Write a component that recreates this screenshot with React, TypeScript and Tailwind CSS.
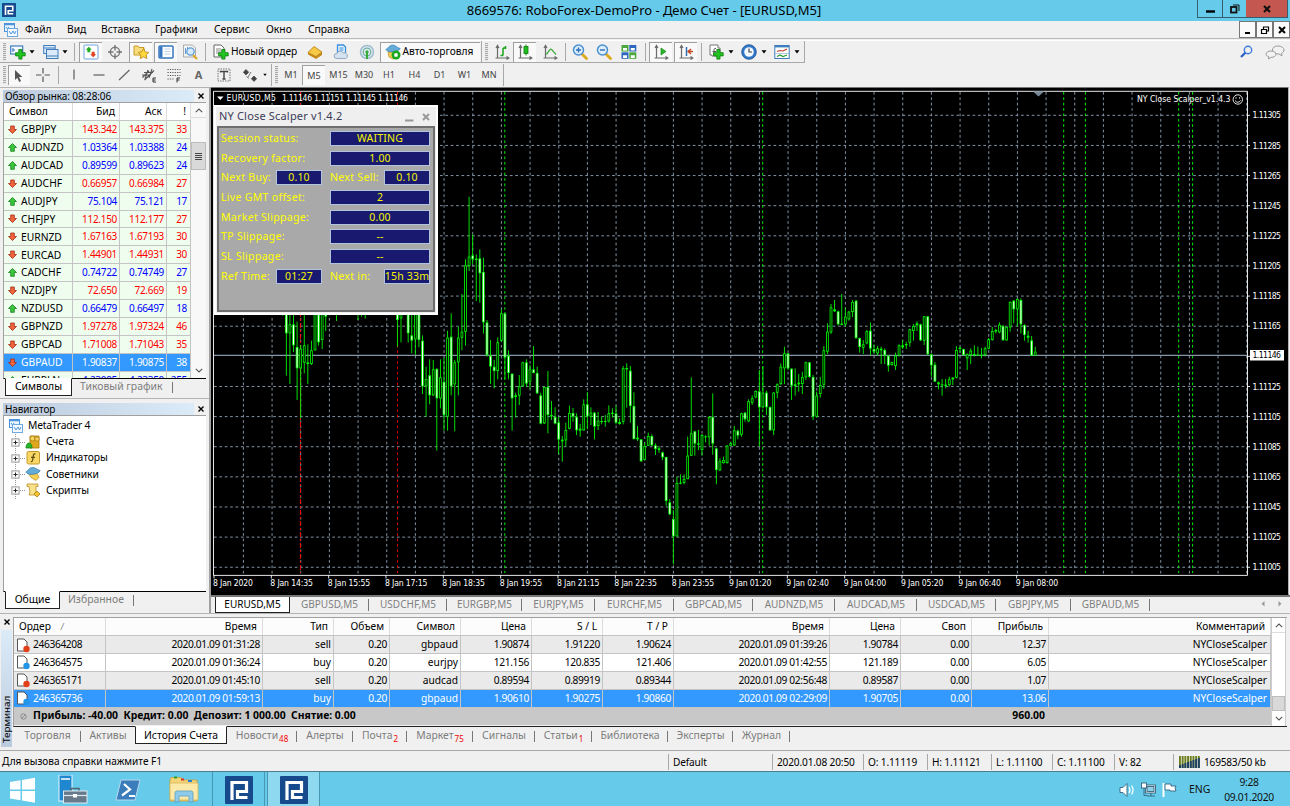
import type { ReactNode } from "react";

const quotes = [
  { s: "GBPJPY", bid: "143.342", ask: "143.375", sp: "33", up: false, red: true },
  { s: "AUDNZD", bid: "1.03364", ask: "1.03388", sp: "24", up: true, red: false },
  { s: "AUDCAD", bid: "0.89599", ask: "0.89623", sp: "24", up: true, red: false },
  { s: "AUDCHF", bid: "0.66957", ask: "0.66984", sp: "27", up: false, red: true },
  { s: "AUDJPY", bid: "75.104", ask: "75.121", sp: "17", up: true, red: false },
  { s: "CHFJPY", bid: "112.150", ask: "112.177", sp: "27", up: false, red: true },
  { s: "EURNZD", bid: "1.67163", ask: "1.67193", sp: "30", up: false, red: true },
  { s: "EURCAD", bid: "1.44901", ask: "1.44931", sp: "30", up: false, red: true },
  { s: "CADCHF", bid: "0.74722", ask: "0.74749", sp: "27", up: true, red: false },
  { s: "NZDJPY", bid: "72.650", ask: "72.669", sp: "19", up: false, red: true },
  { s: "NZDUSD", bid: "0.66479", ask: "0.66497", sp: "18", up: true, red: false },
  { s: "GBPNZD", bid: "1.97278", ask: "1.97324", sp: "46", up: false, red: true },
  { s: "GBPCAD", bid: "1.71008", ask: "1.71043", sp: "35", up: false, red: true },
  { s: "GBPAUD", bid: "1.90837", ask: "1.90875", sp: "38", up: false, red: true },
  { s: "EURPLN", bid: "4.23095", ask: "4.23350", sp: "255", up: true, red: false },
];

const orders = [
  ["246364208", "2020.01.09 01:31:28", "sell", "0.20", "gbpaud", "1.90874", "1.91220", "1.90624", "2020.01.09 01:39:26", "1.90784", "0.00", "12.37"],
  ["246364575", "2020.01.09 01:36:24", "buy", "0.20", "eurjpy", "121.156", "120.835", "121.406", "2020.01.09 01:42:55", "121.189", "0.00", "6.05"],
  ["246365171", "2020.01.09 01:45:10", "sell", "0.20", "audcad", "0.89594", "0.89919", "0.89344", "2020.01.09 02:56:48", "0.89587", "0.00", "1.07"],
  ["246365736", "2020.01.09 01:59:13", "buy", "0.20", "gbpaud", "1.90610", "1.90275", "1.90860", "2020.01.09 02:29:09", "1.90705", "0.00", "13.06"],
];

const orderHeads = ["Время", "Тип", "Объем", "Символ", "Цена", "S / L", "T / P", "Время", "Цена", "Своп", "Прибыль", "Комментарий"];
const orderCols = "grid grid-cols-[92px_157px_71px_56px_71px_71px_71px_71px_156px_71px_71px_77px_1fr]";

// [bar number, high, top, bottom, low, bull], prices in thirds of a pixel
type Bar = [number, number, number, number, number, 0 | 1];

const early: Bar[] = [
  [-1, 20, 30, 60, 77, 1], [0, 20, 60, 130, 257, 0], [1, 60, 103, 130, 282, 1], [2, 70, 103, 166, 186, 0],
  [3, 95, 171, 235, 330, 0], [4, 165, 176, 235, 385, 1], [5, 70, 166, 218, 250, 1], [6, 163, 217, 222, 282, 0],
  [7, 152, 181, 222, 225, 1], [8, 20, 60, 181, 182, 1], [9, 20, 60, 157, 167, 0], [10, 20, 70, 150, 177, 1],
  [11, 20, 60, 80, 123, 0], [14, 20, 30, 50, 93, 1], [20, 20, 30, 50, 90, 1], [21, 20, 30, 50, 80, 1],
  [22, 20, 30, 50, 86, 1], [31, 20, 50, 90, 170, 0], [32, 20, 60, 85, 157, 1], [34, 20, 60, 130, 157, 0],
  [35, 60, 136, 152, 190, 0], [36, 20, 60, 148, 195, 1], [37, 20, 60, 150, 172, 0], [38, 136, 152, 289, 312, 0],
  [39, 230, 267, 289, 380, 1], [40, 208, 256, 316, 343, 0], [41, 210, 238, 316, 318, 1], [42, 234, 237, 325, 482, 0],
  [43, 208, 262, 325, 355, 1], [44, 203, 275, 375, 422, 0], [45, 122, 143, 380, 422, 1], [46, 70, 140, 289, 316, 0],
  [47, 210, 217, 283, 424, 1], [48, 110, 143, 217, 316, 1], [49, 12, 125, 143, 181, 1], [50, -92, -74, 125, 167, 1],
  [51, -280, -100, -72, -57, 1], [52, -167, -104, -92, -77, 0], [53, -107, -94, -90, 33, 0], [54, -122, -95, -50, 38, 0],
  [55, -97, -54, 97, 131, 0], [56, 90, 97, 195, 200, 0], [57, 150, 197, 230, 282, 0], [58, 210, 230, 243, 295, 0],
  [59, 142, 157, 243, 268, 1], [60, 58, 70, 152, 155, 1], [61, 67, 70, 203, 268, 0], [62, 181, 197, 249, 268, 0],
  [63, 250, 251, 325, 422, 0], [64, 308, 316, 321, 383, 0], [65, 255, 289, 317, 345, 1], [66, 215, 217, 289, 290, 1],
  [67, 208, 217, 281, 290, 0], [68, 225, 238, 275, 297, 1], [69, 168, 238, 249, 250, 0], [70, 230, 249, 310, 312, 0],
  [71, 308, 316, 401, 403, 0], [72, 290, 291, 400, 402, 1], [73, 243, 291, 375, 430, 0], [74, 333, 375, 379, 390, 1],
  [75, 352, 381, 401, 403, 0], [76, 380, 397, 449, 493, 0], [77, 438, 449, 454, 515, 0], [78, 398, 420, 451, 470, 1],
  [79, 347, 369, 416, 418, 1], [80, 354, 369, 380, 395, 0], [81, 370, 380, 421, 435, 0], [82, 402, 416, 422, 440, 0],
  [83, 328, 343, 421, 422, 1], [84, 306, 343, 379, 418, 0], [85, 352, 368, 380, 405, 1], [86, 366, 368, 410, 448, 0],
  [87, 366, 392, 408, 420, 1], [88, 380, 393, 396, 403, 1], [89, 375, 393, 396, 410, 1], [90, 346, 370, 394, 398, 1],
  [91, 355, 368, 372, 383, 0], [92, 347, 370, 398, 403, 0], [93, 385, 396, 402, 404, 0],
];

const late: Bar[] = [
  [94, 258, 265, 425, 433, 1], [95, 250, 264, 268, 383, 0], [96, 258, 272, 378, 428, 0], [97, 337, 378, 477, 479, 0],
  [98, 438, 473, 478, 483, 0], [99, 477, 478, 544, 546, 0], [100, 487, 498, 540, 541, 1], [101, 458, 468, 497, 498, 1],
  [102, 463, 468, 496, 498, 0], [103, 490, 496, 507, 525, 0], [104, 498, 505, 510, 518, 0], [105, 515, 517, 532, 540, 0],
  [106, 530, 531, 663, 677, 0], [107, 657, 667, 703, 705, 0], [108, 690, 717, 769, 853, 0], [109, 590, 609, 769, 770, 1],
  [110, 583, 608, 611, 613, 1], [111, 583, 597, 609, 613, 1], [112, 470, 527, 597, 598, 1], [113, 292, 460, 527, 528, 1],
  [114, 452, 454, 491, 527, 0], [115, 450, 490, 494, 510, 0], [116, 462, 465, 510, 527, 1], [117, 466, 469, 472, 487, 1],
  [118, 408, 411, 472, 497, 1], [119, 340, 411, 491, 524, 0], [120, 503, 505, 570, 613, 0], [121, 535, 544, 571, 573, 1],
  [122, 530, 540, 549, 551, 1], [123, 495, 497, 549, 551, 1], [124, 486, 490, 497, 498, 1], [125, 438, 451, 496, 498, 1],
  [126, 449, 452, 467, 478, 0], [127, 398, 400, 464, 470, 1], [128, 396, 398, 418, 425, 0], [129, 358, 364, 424, 426, 1],
  [130, 346, 355, 368, 375, 1], [131, 331, 333, 352, 355, 1], [132, 270, 334, 382, 500, 0], [133, 258, 338, 382, 385, 1],
  [134, 332, 338, 382, 405, 0], [135, 379, 381, 451, 453, 0], [136, 336, 338, 451, 465, 1], [137, 310, 313, 338, 355, 1],
  [138, 250, 260, 312, 315, 1], [139, 200, 220, 265, 312, 1], [140, 219, 220, 265, 270, 0], [141, 265, 266, 317, 360, 0],
  [142, 265, 313, 318, 347, 1], [143, 282, 308, 313, 335, 0], [144, 275, 291, 312, 342, 1], [145, 245, 247, 292, 300, 1],
  [146, 246, 247, 291, 293, 0], [147, 285, 291, 410, 420, 0], [148, 335, 347, 410, 412, 1], [149, 291, 315, 342, 353, 1],
  [150, 198, 211, 314, 327, 1], [151, 130, 155, 215, 222, 1], [152, 72, 82, 157, 162, 1], [153, 60, 88, 94, 96, 0],
  [154, 92, 94, 133, 136, 0], [155, 42, 131, 135, 136, 1], [156, 82, 110, 133, 140, 1], [157, 93, 95, 118, 122, 1],
  [158, 60, 66, 96, 111, 1], [159, 60, 62, 174, 177, 0], [160, 173, 174, 201, 218, 0], [161, 180, 193, 203, 222, 1],
  [162, 150, 154, 190, 193, 1], [163, 127, 152, 206, 226, 0], [164, 193, 207, 215, 222, 0], [165, 198, 205, 220, 227, 1],
  [166, 200, 206, 211, 252, 0], [167, 205, 210, 226, 252, 0], [168, 226, 227, 257, 275, 0], [169, 245, 246, 255, 257, 1],
  [170, 218, 227, 258, 270, 1], [171, 193, 196, 227, 230, 1], [172, 180, 196, 202, 207, 1], [173, 185, 192, 196, 207, 1],
  [174, 146, 148, 188, 200, 1], [175, 132, 138, 153, 182, 1], [176, 124, 130, 136, 153, 1], [177, 131, 133, 181, 183, 0],
  [178, 108, 109, 182, 195, 1], [179, 108, 109, 223, 225, 0], [180, 220, 223, 256, 290, 0], [181, 246, 254, 305, 306, 0],
  [182, 305, 307, 313, 328, 0], [183, 297, 313, 316, 347, 1], [184, 297, 314, 318, 325, 0], [185, 290, 298, 315, 320, 1],
  [186, 291, 293, 298, 315, 1], [187, 198, 210, 293, 295, 1], [188, 200, 203, 207, 218, 1], [189, 206, 207, 225, 227, 0],
  [190, 220, 223, 235, 270, 1], [191, 205, 212, 225, 252, 1], [192, 196, 222, 226, 230, 0], [193, 200, 224, 227, 228, 1],
  [194, 204, 224, 227, 235, 1], [195, 200, 205, 225, 230, 1], [196, 174, 178, 206, 208, 1], [197, 141, 153, 180, 182, 1],
  [198, 146, 150, 155, 160, 1], [199, 127, 134, 157, 160, 1], [200, 134, 138, 181, 182, 0], [201, 140, 141, 181, 182, 1],
  [202, 64, 66, 142, 155, 1], [203, 60, 62, 88, 130, 0], [204, 55, 57, 88, 140, 1], [205, 55, 60, 133, 160, 0],
  [206, 133, 135, 165, 182, 0], [207, 152, 167, 173, 188, 0], [208, 168, 181, 227, 228, 0], [209, 200, 215, 227, 228, 1],
];

const dates = [
  "8 Jan 2020", "8 Jan 14:35", "8 Jan 15:55", "8 Jan 17:15", "8 Jan 18:35", "8 Jan 19:55", "8 Jan 21:15", "8 Jan 22:35",
  "8 Jan 23:55", "9 Jan 01:20", "9 Jan 02:40", "9 Jan 04:00", "9 Jan 05:20", "9 Jan 06:40", "9 Jan 08:00",
];

function Candles({ bars, y0 }: { bars: Bar[]; y0: number }) {
  return (
    <>
      {bars.map(([i, h, t, b, l, bull]) => {
        const x = 286.33 + 3.5833 * i;
        const top = y0 + t / 3;
        const height = Math.max((b - t) / 3, 1);
        return (
          <g key={i}>
            <rect x={x - 0.45} y={y0 + h / 3} width={0.9} height={(l - h) / 3} fill="#00f400" />
            <rect x={x - 1.35} y={top} width={2.7} height={height} fill="#00f400" />
            {height > 2 && (
              <rect x={x - 0.5} y={top + 0.8} width={1} height={height - 1.6} fill={bull ? "#000" : "#fff"} />
            )}
          </g>
        );
      })}
    </>
  );
}

function Chart() {
  const cols = Array.from({ length: 36 }, (_, k) => 243.4 + 28.667 * k);
  const rows = Array.from({ length: 16 }, (_, k) => 115.3 + 30.13 * k);
  return (
    <svg width="1079" height="508" viewBox="211 87 1079 508" className="block" fontFamily='"DejaVu Sans Condensed", "DejaVu Sans", sans-serif'>
      <rect x="211" y="87" width="1079" height="508" fill="#000" />
      <path d="M211 87.5H1288.5V594" fill="none" stroke="#777" />
      <rect x="1288.5" y="87" width="1.5" height="508" fill="#f0f0f0" />
      {cols.map((x) => (
        <path key={x} d={`M${x} 92V575`} stroke="#8293a4" strokeWidth="1" strokeDasharray="2.69 2.69" />
      ))}
      {rows.map((y, k) =>
        k === 8 ? null : <path key={y} d={`M214 ${y}H1247`} stroke="#8293a4" strokeWidth="1" strokeDasharray="2.69 2.69" />
      )}
      <path d="M300.4 92V573" stroke="#f00" strokeDasharray="5 2 2 2" />
      <path d="M397.5 92V573" stroke="#e00000" strokeDasharray="2.69 2.69" />
      {[504.8, 762.7, 1063.7, 1085.4, 1178.7, 1192.6].map((x) => (
        <path key={x} d={`M${x} 92V573`} stroke="#00f000" strokeDasharray="2.69 2.69" />
      ))}
      <path d="M214 355.4H1247" stroke="#8496a8" strokeWidth="1.2" />
      <Candles bars={early} y0={290} />
      <Candles bars={late} y0={280} />
      <path d="M213.5 575.4V91.3H1247.5V575.4Z" fill="none" stroke="#fff" strokeWidth="0.9" />
      <path d="M1033 91.5h11l-5.5 5z" fill="#778899" />
      {rows.map((y, k) => (
        <g key={y}>
          <path d={`M1247 ${y}h3`} stroke="#fff" strokeWidth="0.9" />
          {k !== 8 && (
            <text x="1252.5" y={y + 3.1} fontSize="8.6" fill="#fff" textLength="28.5">
              {(1.11305 - k * 0.0002).toFixed(5)}
            </text>
          )}
        </g>
      ))}
      <rect x="1250" y="350" width="34" height="10.5" fill="#fff" />
      <text x="1252.5" y="358.4" fontSize="8.6" fill="#000" textLength="28.5">1.11146</text>
      {dates.map((d, k) => (
        <g key={d}>
          <path d={`M${214 + 57.333 * k} 575v3.5`} stroke="#fff" strokeWidth="0.9" />
          <text x={213 + 57.333 * k} y="586.4" fontSize="8.6" fill="#fff" textLength={k ? 42.5 : 40}>{d}</text>
        </g>
      ))}
      <path d="M217 96.5h6.5l-3.2 3.6z" fill="#fff" />
      <text x="226.5" y="101.3" fontSize="8.6" fill="#fff" textLength="49.5">EURUSD,M5</text>
      <text x="282" y="101.3" fontSize="8.6" fill="#fff" textLength="126">1.11146 1.11151 1.11145 1.11146</text>
      <text x="1137" y="102.3" fontSize="8.6" fill="#fff" textLength="93.5">NY Close Scalper_v1.4.3</text>
      <g fill="none" stroke="#fff" strokeWidth="0.9">
        <circle cx="1237.8" cy="99.5" r="4.7" />
        <path d="M1235 100.5q2.8 3.6 5.6 0M1236 97.2v1.5M1239.6 97.2v1.5" />
      </g>
    </svg>
  );
}

function Box({ children }: { children: ReactNode }) {
  return (
    <div className="h-[15px] flex items-center justify-center overflow-hidden border border-[#b0c4de] bg-[#191970] text-[10.5px] tracking-[0.2px] text-[#f4f400] whitespace-nowrap">
      {children}
    </div>
  );
}

function ScalperPanel() {
  const rows = [
    ["Session status:", "WAITING"],
    ["Recovery factor:", "1.00"],
    ["Next Buy:", "0.10", "Next Sell:", "0.10"],
    ["Live GMT offset:", "2"],
    ["Market Slippage:", "0.00"],
    ["TP Slippage:", "--"],
    ["SL Slippage:", "--"],
    ["Ref Time:", "01:27", "Next in:", "15h 33m"],
  ];
  return (
    <div className="absolute left-[3px] top-[18px] w-[224px] h-[210px] flex flex-col bg-[#efefef] border-2 border-white p-[1px] pt-0">
      <div className="h-[19px] flex items-center pl-[2px] pr-1 text-[11px] tracking-[0.18px] text-[#3c3c5a]">
        <span className="flex-1">NY Close Scalper v1.4.2</span>
        <svg width="28" height="12" viewBox="0 0 28 12" stroke="#999" fill="none">
          <path d="M2 9.500h8.500" strokeWidth="2" />
          <path d="M20 3l6 6M26 3l-6 6" strokeWidth="2" />
        </svg>
      </div>
      <div className="flex-1 border-2 border-[#6e6e6e] bg-[#a9a9a9] pl-[2px] pr-[2px] pt-[3px] text-[10.5px] tracking-[0.32px] text-[#ffff00] flex flex-col gap-[4.7px]">
        {rows.map((r) => (
          <div key={r[0]} className={r.length > 2 ? "grid grid-cols-[55px_46px_8px_54px_46px] items-center leading-[15px] whitespace-nowrap" : "grid grid-cols-[109px_100px] items-center leading-[15px] whitespace-nowrap"}>
            <span>{r[0]}</span>
            <Box>{r[1]}</Box>
            {r.length > 2 && (
              <>
                <span />
                <span>{r[2]}</span>
                <Box>{r[3]}</Box>
              </>
            )}
          </div>
        ))}
      </div>
    </div>
  );
}

function Logo({ size }: { size: number }) {
  return (
    <svg width={size} height={size} viewBox="0 0 28 28" className="shrink-0">
      <rect width="28" height="28" rx="1" fill="#164a8c" />
      <path d="M7 24V6.500H21.500V15.500H12.500V21.500H22.500" fill="none" stroke="#fff" strokeWidth="3.200" />
    </svg>
  );
}

function Tool({ w, on, children }: { w: string; on?: boolean; children?: ReactNode }) {
  return (
    <div className={`${w} h-[20px] shrink-0 flex items-center justify-center whitespace-nowrap ${on ? "border-l border-t border-[#a0a0a0] bg-[#f9f9f9]" : ""}`}>
      {children}
    </div>
  );
}

function Sep({ w }: { w: string }) {
  return (
    <div className={`${w} shrink-0 flex justify-center`}>
      <div className="w-px h-[18px] bg-[#a8a8a8]" />
    </div>
  );
}

function Grip() {
  return (
    <div className="w-2 shrink-0 flex justify-center">
      <div className="w-[3px] h-[18px] bg-[repeating-linear-gradient(to_bottom,#a9a9a9_0_1px,#e6e6e6_1px_2px)]" />
    </div>
  );
}

function Caret({ w }: { w: string }) {
  return (
    <div className={`${w} shrink-0 flex justify-center`}>
      <svg width="6" height="4" viewBox="0 0 6 4"><path d="M.5 .3h5L3 3.500z" fill="#000" /></svg>
    </div>
  );
}

function Svg({ children }: { children: ReactNode }) {
  return (
    <svg width="16" height="16" viewBox="0 0 16 16" fill="none" className="shrink-0">{children}</svg>
  );
}

const plus = "M8.800 5.500h3.200v3.200h3.200v3.200h-3.200v3.200h-3.200v-3.200H5.600V8.700h3.200z";

const Axes = () => <path d="M3.500 1.500v12.500H15M2 4l1.500-2.500L5 4M12.500 12.500L15 14l-2.500 1.500M1.500 14h3" stroke="#6b6b6b" strokeWidth="1.200" />;

function MtIcon() {
  return (
    <Svg>
      <rect x="1.500" y="1.500" width="10" height="8" fill="#e8f3fd" stroke="#4d94dc" />
      <path d="M1 2.500h11" stroke="#4d94dc" strokeWidth="1.500" />
      <path d="M3 5l1.500 2L6 5" stroke="#4d94dc" />
      <rect x="4.500" y="6.500" width="10" height="8" fill="#f4faff" stroke="#6fa9e4" />
      <path d="M6 9l2 3 2-3 1.500 3L13 9" stroke="#4d94dc" />
    </Svg>
  );
}

function Magnifier({ sign }: { sign: string }) {
  return (
    <Svg>
      <path d="M10 10l4.500 4.500" stroke="#dba820" strokeWidth="2.800" strokeLinecap="round" />
      <circle cx="6.500" cy="6" r="5" fill="#dceefb" stroke="#4a8fd0" strokeWidth="1.500" />
      <path d={sign} stroke="#2f6fb5" strokeWidth="1.400" />
    </Svg>
  );
}

function TopToolbar() {
  return (
    <div className="h-[23px] shrink-0 flex items-center border-t border-white text-[10.2px]">
      <div className="h-[22px] flex items-center border-b border-[#a8a8a8] border-r w-[482px] shrink-0">
        <Grip />
        <Tool w="w-5">
          <Svg>
            <rect x=".7" y="2" width="12" height="8" fill="#f4faff" stroke="#3f7dbd" strokeWidth="1.200" />
            <path d="M3 4v4M2 6h3" stroke="#3f7dbd" />
            <path d={plus} fill="#22c322" stroke="#0b7d0b" strokeWidth=".8" />
          </Svg>
        </Tool>
        <Caret w="w-2" />
        <Tool w="ml-[5px] w-5">
          <Svg>
            <rect x=".7" y="1.500" width="11.500" height="8" fill="#dcebf9" stroke="#3f7dbd" />
            <rect x="3.500" y="5.500" width="11.500" height="9" fill="#dcebf9" stroke="#3f7dbd" />
            <path d="M1 4h11M3.500 12h11.500" stroke="#3f7dbd" />
          </Svg>
        </Tool>
        <Caret w="w-2" />
        <Sep w="w-[10px]" />
        <Tool w="w-[23px]" on>
          <Svg>
            <rect x="1" y="1" width="14" height="14" rx="1" fill="#fff" stroke="#6da5df" />
            <path d="M5.800 2.800l3 3H7.300v2.400H4.300V5.800H2.800z" fill="#1fae1f" />
            <path d="M10.200 13.200l-3-3h1.500V7.800h3v2.400h1.500z" fill="#e0401c" />
          </Svg>
        </Tool>
        <Tool w="w-[26px]">
          <Svg>
            <circle cx="8" cy="8" r="4.700" stroke="#777" strokeWidth="1.400" />
            <path d="M8 1v5.500M8 9.500V15M1 8h5.500M9.500 8H15" stroke="#777" strokeWidth="1.400" />
          </Svg>
        </Tool>
        <Tool w="ml-px w-[23px]" on>
          <Svg>
            <path d="M1 2h4l1 1.500h5V11H1z" fill="#f8dc7c" stroke="#c99b24" />
            <path d="M10.500 4.500l1.700 3.400 3.600.5-2.600 2.500.6 3.700-3.300-1.800-3.300 1.800.6-3.700-2.600-2.500 3.600-.5z" fill="#ffd83c" stroke="#b98510" strokeWidth=".8" />
          </Svg>
        </Tool>
        <Tool w="ml-[2px] w-[23px]" on>
          <Svg>
            <rect x="1" y="2" width="14" height="12" rx="1" fill="#fff" stroke="#3677bf" strokeWidth="1.500" />
            <rect x="1.500" y="2.500" width="3" height="11" fill="#3677bf" />
            <path d="M6.500 5h6M6.500 7.500h6M6.500 10h6" stroke="#a9c6e6" strokeWidth=".8" />
          </Svg>
        </Tool>
        <Tool w="w-[26px]">
          <Svg>
            <path d="M1.500 1h9l3 3v9h-12z" fill="#f4f4f4" stroke="#999" strokeWidth=".8" />
            <path d="M3.500 4v6M5.500 3v6" stroke="#5e9ad8" />
            <path d="M11 11l4 4" stroke="#dba820" strokeWidth="2.200" />
            <circle cx="8.500" cy="7.500" r="3.700" fill="#d6ebfb" stroke="#5e9ad8" strokeWidth="1.300" />
          </Svg>
        </Tool>
        <Sep w="w-[5px]" />
        <Tool w="ml-[2px] w-[94px]">
          <div className="w-full flex items-center pl-[3px]">
            <Svg>
              <path d="M1 1h7l3 3v9H1z" fill="#fff" stroke="#666" />
              <path d="M3 5h5M3 7h6M3 9h4" stroke="#888" />
              <path d={plus} fill="#22c322" stroke="#0b7d0b" strokeWidth=".8" />
            </Svg>
            <span className="ml-[2px]">Новый ордер</span>
          </div>
        </Tool>
        <Tool w="w-[22px]">
          <Svg>
            <path d="M1 8.500l6-6 8 5.500v3l-6 4-8-4.500z" fill="#c58a1a" />
            <path d="M1 8.500l6-6 8 5.500-6 4.500z" fill="#f7c944" stroke="#b07812" strokeWidth=".7" />
          </Svg>
        </Tool>
        <Tool w="w-[29px]">
          <Svg>
            <path d="M4.500 1h6l2 2v7h-8z" fill="#e3f2fe" stroke="#3b8edb" strokeWidth="1.300" />
            <path d="M6.500 4h4M6.500 6h4" stroke="#3b8edb" />
            <path d="M3.500 14.500a2.500 2.500 0 01.3-5 3.500 3.500 0 016.400-.5 2.700 2.700 0 012.500 5.500z" fill="#d5e2ef" stroke="#8198b3" strokeWidth=".8" />
          </Svg>
        </Tool>
        <Tool w="w-[23px]">
          <Svg>
            <circle cx="8" cy="8" r="6.500" fill="#e4eef4" stroke="#9fbccf" strokeWidth="1.500" />
            <circle cx="8" cy="8" r="3.800" stroke="#6fae9c" strokeWidth="1.300" />
            <circle cx="8" cy="8" r="1.700" fill="#38ab38" />
            <path d="M8 8v7" stroke="#38ab38" strokeWidth="2" />
          </Svg>
        </Tool>
        <Tool w="ml-[2px] w-[100px]" on>
          <Svg>
            <path d="M3 8l10-.5-1 5-4 2.500-4-2z" fill="#f6cf55" stroke="#b78a1a" strokeWidth=".7" />
            <path d="M.8 5.500C3 5 4 1 7.500 1S12 4 15.200 4.500C14 8 3 9.500.8 5.500z" fill="#65abd8" stroke="#2f7db3" strokeWidth=".7" />
            <circle cx="11" cy="11" r="4.500" fill="#1ca81c" />
            <rect x="9.300" y="9.300" width="3.400" height="3.400" rx=".8" fill="#fff" />
          </Svg>
          <span className="ml-[2px] mr-[3px]">Авто-торговля</span>
        </Tool>
      </div>
      <div className="h-[22px] flex items-center border-b border-r border-[#a8a8a8] w-[323px] shrink-0">
        <Grip />
        <Tool w="w-[23px]">
          <Svg><Axes /><path d="M9 4v7.500M9 4h2.500M6.500 11.500H9M11.500 2v3" stroke="#17a317" strokeWidth="1.500" /></Svg>
        </Tool>
        <Tool w="w-[23px]" on>
          <Svg><Axes /><path d="M9 .5v11" stroke="#118811" /><rect x="7" y="2.500" width="4" height="7" fill="#1fbf1f" stroke="#0b7d0b" strokeWidth=".8" /></Svg>
        </Tool>
        <Tool w="w-[27px]">
          <Svg><Axes /><path d="M4.500 10.500C7 7 8 5 9 5.200s3 3.300 5 5.300" stroke="#3daa3d" strokeWidth="1.300" /></Svg>
        </Tool>
        <Sep w="w-[5px]" />
        <Tool w="w-[23px]"><Magnifier sign="M4 6h5M6.500 3.500v5" /></Tool>
        <Tool w="w-[26px]"><Magnifier sign="M4 6h5" /></Tool>
        <Tool w="w-6">
          <Svg>
            <rect x=".5" y="1" width="7" height="6.500" fill="#4ba83d" /><rect x="8.300" y="1" width="7" height="6.500" fill="#2c66c0" />
            <rect x=".5" y="8.300" width="7" height="6.500" fill="#2c66c0" /><rect x="8.300" y="8.300" width="7" height="6.500" fill="#4ba83d" />
            <path d="M2 5.300h4M9.800 5.300h4M2 12.600h4M9.800 12.600h4" stroke="#fff" strokeWidth="2.600" />
          </Svg>
        </Tool>
        <Sep w="w-2" />
        <Tool w="w-[23px]" on><Svg><Axes /><path d="M8 4v7l5-3.500z" fill="#2cb52c" stroke="#118811" strokeWidth=".7" /></Svg></Tool>
        <Tool w="ml-[2px] w-[23px]" on><Svg><Axes /><path d="M8.500 3v9" stroke="#2f6fb5" strokeWidth="1.500" /><path d="M15 7.500h-4M13 5l-3 2.500L13 10" stroke="#c4421e" strokeWidth="1.300" /></Svg></Tool>
        <Sep w="w-2" />
        <Tool w="w-[22px]">
          <Svg>
            <path d="M2 1h8v3h2v8H4v-1H2z" fill="#fff" stroke="#777" />
            <path d="M8 4.500c-1.500-.5-2 .5-2 2V11M4.500 7.500H8" stroke="#555" />
            <path d={plus} fill="#22c322" stroke="#0b7d0b" strokeWidth=".8" />
          </Svg>
        </Tool>
        <Caret w="w-2" />
        <Tool w="ml-[3px] w-[22px]">
          <Svg>
            <circle cx="8" cy="8" r="7.300" fill="#2f77c9" stroke="#1d4f94" strokeWidth=".8" />
            <circle cx="8" cy="8" r="4.800" fill="#f2f8ff" />
            <path d="M8 4.500V8h3" stroke="#444" strokeWidth="1.200" />
          </Svg>
        </Tool>
        <Caret w="w-[7px]" />
        <Tool w="ml-[4px] w-[22px]">
          <Svg>
            <rect x=".8" y="1.500" width="14.400" height="13" fill="#fff" stroke="#3f7dbd" />
            <path d="M1 2.500h14" stroke="#3f7dbd" strokeWidth="1.800" />
            <path d="M3 7.500l3-1 3 .5 4-2" stroke="#c23b22" strokeWidth="1.200" />
            <path d="M1 9.500h14" stroke="#8fb4da" strokeWidth=".7" />
            <path d="M3 12.500l3-1.500 3 1.500 4-1.500" stroke="#2c9a2c" strokeWidth="1.200" />
          </Svg>
        </Tool>
        <Caret w="w-[7px]" />
      </div>
      <div className="flex-1" />
      <div className="flex items-center gap-3 pr-[5px]">
        <svg width="14" height="14" viewBox="0 0 14 14" fill="none"><circle cx="9" cy="5" r="3.700" stroke="#3c7be0" strokeWidth="1.400" /><path d="M6.300 7.700L2 12" stroke="#2d62c4" strokeWidth="2.300" /></svg>
        <svg width="20" height="15" viewBox="0 0 20 15" fill="#f2f2f2" stroke="#9a9a9a" strokeWidth="1"><path d="M13 1c3.500 0 6 1.800 6 4 0 1.500-1 2.700-2.500 3.300l.5 2.500L14 9c-4 0-6.500-1.700-6.500-4S9.500 1 13 1z" /><path d="M6 6c3 0 5 1.400 5 3.200s-2 3.200-5 3.200L3.500 14l.3-2.300C2 11.200 1 10.300 1 9.200 1 7.400 3 6 6 6z" /></svg>
      </div>
    </div>
  );
}

function DrawToolbar() {
  const frames = [
    ["M1", "w-[22px]"], ["M5", "w-[23px]"], ["M15", "w-[27px]"], ["M30", "w-6"], ["H1", "w-[26px]"],
    ["H4", "w-[25px]"], ["D1", "w-[25px]"], ["W1", "w-[25px]"], ["MN", "w-6"],
  ];
  return (
    <div className="h-[24px] shrink-0 flex items-center text-[9px] text-[#444]">
      <div className="h-[22px] w-[272px] shrink-0 flex items-center border-r border-[#a8a8a8]">
        <Grip />
        <Tool w="w-[22px]" on>
          <div className="-ml-1"><Svg><path d="M5 2v10l2.300-2.200L9.200 14l1.800-.9L9 9h3.300z" fill="#555" /></Svg></div>
        </Tool>
        <Tool w="w-[26px]"><Svg><path d="M8 1v5.500M8 9.500V15M1 8h5.500M9.500 8H15" stroke="#555" strokeWidth="1.200" /></Svg></Tool>
        <Sep w="w-[5px]" />
        <Tool w="w-[26px]"><Svg><path d="M8 2.500v10" stroke="#666" strokeWidth="1.300" /></Svg></Tool>
        <Tool w="w-6"><Svg><path d="M2.500 8h11" stroke="#666" strokeWidth="1.300" /></Svg></Tool>
        <Tool w="w-[25px]"><Svg><path d="M3 13L13.500 3" stroke="#666" strokeWidth="1.300" /></Svg></Tool>
        <Tool w="w-[25px]">
          <Svg>
            <path d="M1.500 10.500L8 4M3.500 13L13 3.500M1 8h9M3 5.500h9M4 12l3-9M8 11l3-9" stroke="#555" strokeWidth="1.100" />
            <path d="M15 11h-3v4h3M12 13h2.500" stroke="#333" />
          </Svg>
        </Tool>
        <Tool w="w-[25px]">
          <Svg>
            <path d="M1.500 2.500h13M1.500 5.500h13M1.500 8.500h13M1.500 12h7" stroke="#555" strokeDasharray="1.200 1.200" />
            <path d="M14 11h-3v4.500M11 13h2.500" stroke="#333" />
          </Svg>
        </Tool>
        <Tool w="w-[25px]"><span className="text-[11px] font-bold text-[#666]">A</span></Tool>
        <Tool w="w-[25px]">
          <Svg>
            <rect x="2" y="2" width="12" height="12" stroke="#777" strokeDasharray="1.500 1" />
            <path d="M4.500 5.500V4.500h7v1M8 4.500V12M6.500 12h3" stroke="#444" strokeWidth="1.400" />
          </Svg>
        </Tool>
        <Tool w="w-[27px]">
          <Svg><path d="M4 2.500l2.700 2.700L4 8 1.300 5.200zM9 5L6 10M4.500 9.500L7 11.500M12 9l2.700 2.700L12 14.400l-2.700-2.700z" fill="#444" stroke="#444" strokeWidth=".7" /></Svg>
        </Tool>
        <Caret w="w-1" />
      </div>
      <div className="h-[22px] flex items-center border-r border-[#a8a8a8] w-[232px] shrink-0">
        <Grip />
        {frames.map(([f, w]) => (
          <Tool key={f} w={w} on={f === "M5"}>{f}</Tool>
        ))}
      </div>
    </div>
  );
}

function Arrow({ up }: { up: boolean }) {
  return (
    <svg width="9" height="9" viewBox="0 0 9 9" className="shrink-0">
      {up
        ? <path d="M4.500 .5L8.500 4.500H6.300V8.300H2.700V4.500H.5z" fill="#3cc63c" stroke="#12801a" strokeWidth=".8" />
        : <path d="M4.500 8.500L8.500 4.500H6.300V1H2.700V4.500H.5z" fill="#f0653c" stroke="#a32a12" strokeWidth=".8" />}
    </svg>
  );
}

function PaneTitle({ children }: { children: ReactNode }) {
  return (
    <div className="h-[13px] flex items-center text-[10px] leading-[13px]">
      <div className="flex-1 h-[12px] leading-[12px] pl-[2px] tracking-[-0.12px] bg-gradient-to-r from-[#bccbdd] to-[#dcebf8]">{children}</div>
      <div className="w-[13px] flex justify-center">
        <svg width="6" height="6" viewBox="0 0 6 6"><path d="M.5 .5l5 5M5.500 .5l-5 5" stroke="#000" strokeWidth="1.400" /></svg>
      </div>
    </div>
  );
}

function ScrollArrow({ down }: { down?: boolean }) {
  return (
    <svg width="8" height="5" viewBox="0 0 8 5" fill="none" stroke="#555" strokeWidth="1.100">
      <path d={down ? "M.8 .8L4 4 7.200 .8" : "M.8 4.200L4 1l3.200 3.200"} />
    </svg>
  );
}

function MarketWatch() {
  return (
    <div className="h-[311px] pt-px pl-[3px] pr-[2px] border-b border-[#b4b4b4]">
      <PaneTitle>Обзор рынка: 08:28:06</PaneTitle>
      <div className="h-[277px] mr-[1px] flex border-t border-l border-[#a0a0a0] border-b-[#000] border-b bg-white overflow-hidden">
        <div className="w-[187px] text-[10.3px]">
          <div className="h-[17px] grid grid-cols-[69px_47px_47px_24px] leading-[17px] text-right [&>span]:pr-[4px] [&>span]:border-r [&>span]:border-[#dcdcdc]">
            <span className="text-left pl-[5px]">Символ</span><span>Бид</span><span>Аск</span><span>!</span>
          </div>
          {quotes.map((q) => {
            const sel = q.s === "GBPAUD";
            return (
              <div
                key={q.s}
                className={`h-[17.92px] grid grid-cols-[69px_47px_47px_24px] leading-[16.5px] text-right border-t border-[#c4c4c4] [&>span]:pr-[2px] [&>span]:border-r [&>span]:border-[#c4c4c4] ${sel ? "bg-[#3399ff] text-white" : q.red ? "bg-[#effdef] text-[#f00]" : "bg-[#effdef] text-[#00f]"}`}
              >
                <span className={`flex items-center gap-[4px] pl-[4px] ${sel ? "text-white" : "text-black"}`}><Arrow up={q.up} />{q.s}</span>
                <span className="text-[10px] tracking-[-0.3px]">{q.bid}</span>
                <span className="text-[10px] tracking-[-0.3px]">{q.ask}</span>
                <span className="text-[10px] !pr-[3px] tracking-[-0.3px]">{q.sp}</span>
              </div>
            );
          })}
        </div>
        <div className="flex-1 bg-[#f8f8f8] flex flex-col">
          <div className="h-[15px] flex items-center justify-center border-b border-[#ddd]"><ScrollArrow /></div>
          <div className="h-[24px]" />
          <div className="h-[28px] border border-[#bdbdbd] bg-[#d9d9d9] flex flex-col items-center justify-center gap-[1px]">
            <i className="w-[7px] h-px bg-[#444]" /><i className="w-[7px] h-px bg-[#444]" /><i className="w-[7px] h-px bg-[#444]" /><i className="w-[7px] h-px bg-[#444]" />
          </div>
          <div className="flex-1" />
          <div className="h-[15px] flex items-center justify-center"><ScrollArrow down /></div>
        </div>
      </div>
      <PaneTabs active="Символы" other="Тиковый график" w="w-[67px]" />
    </div>
  );
}

function PaneTabs({ active, other, w }: { active: string; other: string; w: string }) {
  return (
    <div className="h-[18px] -mt-px flex items-start pl-[2px] text-[10.4px] leading-[15px]">
      <div className={`${w} h-[18px] border border-t-white border-[#222] bg-white text-center`}>{active}</div>
      <span className="pl-[8px] text-[#7d7d7d] leading-[17px]">{other}</span>
      <span className="ml-[9px] mt-[4px] w-px h-[11px] bg-[#777]" />
    </div>
  );
}

function Navigator() {
  const items = ["Счета", "Индикаторы", "Советники", "Скрипты"];
  const icons = [
    <Svg key="a"><path d="M5 2h9v12H5z" fill="#e0a81c" stroke="#a8780c" strokeWidth=".8" /><circle cx="7.500" cy="4.500" r="2.500" fill="#f4d460" stroke="#a8780c" strokeWidth=".8" /><circle cx="12" cy="5" r="2.200" fill="#f4d460" stroke="#a8780c" strokeWidth=".8" /><path d="M1 14c0-3 1-5 3-5s3 2 3 5z" fill="#2cb52c" stroke="#118811" strokeWidth=".8" /></Svg>,
    <Svg key="b"><rect x="2" y="1.500" width="12.500" height="12.500" rx="1.500" fill="#f8d764" stroke="#c49a2a" /><path d="M10.500 4c-2-.7-2.300 1-2.500 3.500S7.500 12 5.800 11.500M6 7.300h4" stroke="#5c4a12" strokeWidth="1.200" /></Svg>,
    <Svg key="c"><path d="M4 8l8-.5 2 4-3 3-5-3z" fill="#f6cf55" stroke="#b78a1a" strokeWidth=".7" /><path d="M.8 6C3 5 4 1.500 7.500 1.500S12 4 15.200 4.500C14 8.500 3 10 .8 6z" fill="#65abd8" stroke="#2f7db3" strokeWidth=".7" /></Svg>,
    <Svg key="d"><path d="M2 2h11v2.500h-2V10l1.500 3H4l1-3-1-5.500H2z" fill="#f9e08a" stroke="#b98f22" strokeWidth=".8" /><path d="M12 9l3 3-3 3-3-3z" fill="#f3c533" stroke="#a8780c" strokeWidth=".8" /></Svg>,
  ];
  return (
    <div className="h-[213px] pt-[3px] pl-[3px] pr-[2px]">
      <PaneTitle>Навигатор</PaneTitle>
      <div className="h-[177px] mr-[1px] pt-px border-t border-l border-[#a0a0a0] border-b-[#000] border-b bg-white text-[10.3px] tracking-[-0.08px]">
        <div className="h-[17px] flex items-center gap-[4px] pl-[4px]"><MtIcon /><span className="tracking-[-0.2px]">MetaTrader 4</span></div>
        {items.map((it, i) => (
          <div key={it} className="h-[16.13px] flex items-center pl-[7px]">
            <svg width="14" height="16.500" viewBox="0 0 14 16.500" fill="none" className="shrink-0">
              <path d="M4.500 0v17M9 8.500h6" stroke="#999" strokeDasharray="1 1" />
              <rect x=".9" y="4.900" width="7.200" height="7.200" fill="#fff" stroke="#999" />
              <path d="M2.500 8.500h4M4.500 6.500v4" stroke="#222" />
            </svg>
            {icons[i]}
            <span className="pl-[5px]">{it}</span>
          </div>
        ))}
      </div>
      <PaneTabs active="Общие" other="Избранное" w="w-[55px]" />
    </div>
  );
}

const chartTabs = ["GBPUSD,M5", "USDCHF,M5", "EURGBP,M5", "EURJPY,M5", "EURCHF,M5", "GBPCAD,M5", "AUDNZD,M5", "AUDCAD,M5", "USDCAD,M5", "GBPJPY,M5", "GBPAUD,M5"];
const tabWidths = ["w-[79px]", "w-[78px]", "w-[75px]", "w-[73px]", "w-[79px]", "w-[79px]", "w-[82px]", "w-[82px]", "w-[79px]", "w-[75px]", "w-[79px]"];

function ChartTabs() {
  return (
    <div className="h-[18px] flex items-start border-t-2 border-[#777] text-[10px] leading-[15px] text-[#808080]">
      <div className="ml-1 w-[75px] h-[16px] border-x border-b border-[#222] bg-white text-center text-black">EURUSD,M5</div>
      {chartTabs.map((t, i) => (
        <div key={t} className={`${tabWidths[i]} flex items-center justify-center relative`}>
          {t}
          <i className="absolute right-0 top-[2px] w-px h-[12px] bg-[#777]" />
        </div>
      ))}
      <div className="flex-1" />
      <svg width="24" height="15" viewBox="0 0 24 15" fill="#999"><path d="M3.500 4v5.500L.5 6.800zM17.500 4v5.500l3-2.700z" /></svg>
      <div className="w-[5px]" />
    </div>
  );
}

function Terminal() {
  const tabs: [string, string, string?][] = [
    ["Новости", "w-[70px]", "48"], ["Алерты", "w-[56px]"], ["Почта", "w-[54px]", "2"], ["Маркет", "w-[66px]", "75"],
    ["Сигналы", "w-[62px]"], ["Статьи", "w-[57px]", "1"], ["Библиотека", "w-[76px]"], ["Эксперты", "w-[65px]"], ["Журнал", "w-[57px]"],
  ];
  return (
    <div className="h-[137px] shrink-0 border-t border-[#b4b4b4] flex pt-[3px]">
      <div className="w-[13px] shrink-0 flex flex-col items-center pt-[2px]">
        <svg width="6" height="6" viewBox="0 0 6 6"><path d="M.5 .5l5 5M5.500 .5l-5 5" stroke="#000" strokeWidth="1.400" /></svg>
        <div className="mt-[5px] w-[11px] h-[117px] bg-gradient-to-b from-[#bccbdd] to-[#dcebf8] pt-[4px] [writing-mode:vertical-rl] rotate-180 text-[9.8px] leading-[11px]">
          Терминал
        </div>
      </div>
      <div className="flex-1 min-w-0 pr-[3px]">
        <div className="h-[110px] flex border-t border-l border-[#a0a0a0] border-b-[#222] border-b">
          <div className="w-[1257px] text-[10.2px]">
            <div className={`${orderCols} h-[17px] bg-[#fcfcfc] leading-[17px] text-right [&>span]:pr-[5px] [&>span]:border-r [&>span]:border-[#dcdcdc]`}>
              <span className="text-left pl-[5px]">Ордер<i className="pl-[10px] text-[8px] text-[#777]">/</i></span>
              {orderHeads.map((h, i) => <span key={i}>{h}</span>)}
            </div>
            {orders.map((o, r) => (
              <div
                key={o[0]}
                className={`${orderCols} h-[17.9px] leading-[17px] text-right border-t border-[#c4c4c4] [&>span]:pr-[2px] [&>span]:border-r [&>span]:border-[#c4c4c4] ${r === 3 ? "bg-[#3399ff] text-white" : r % 2 ? "bg-white" : "bg-[#eaeaea]"}`}
              >
                <span className="flex items-center gap-[2px] pl-[1px] tracking-[-0.35px]">
                  <Svg>
                    <path d="M2.500 2h6.500l3 3v9h-9.500z" fill="#fff" stroke="#555" />
                    <circle cx="11.500" cy="12" r="3.200" fill={o[2] === "sell" ? "#e2401b" : "#2196e8"} />
                  </Svg>
                  {o[0]}
                </span>
                {o.slice(1).map((v, i) => <span key={i} className={i === 1 || i === 3 ? "" : "tracking-[-0.35px]"}>{v}</span>)}
                <span className="!pr-[3px]">NYCloseScalper</span>
              </div>
            ))}
            <div className="h-[18.4px] bg-[#c8c8c8] border-t border-[#c4c4c4] flex items-center text-[10.4px] font-bold">
              <svg width="7" height="7" viewBox="0 0 7 7" className="ml-[6px]"><circle cx="3.500" cy="3.500" r="2.700" fill="#ccc" stroke="#888" /><path d="M2 5l3-3" stroke="#888" /></svg>
              <span className="pl-[6px] w-[979px] whitespace-pre">Прибыль: -40.00  Кредит: 0.00  Депозит: 1 000.00  Снятие: 0.00</span>
              <span className="w-[39px] text-right">960.00</span>
            </div>
          </div>
          <div className="w-[15px] bg-white border-x border-[#ccc] flex flex-col">
            <div className="h-[15px] flex items-center justify-center border-b border-[#ddd]"><ScrollArrow /></div>
            <div className="flex-1" />
            <div className="h-[15px] border border-[#bdbdbd] bg-[#d9d9d9]" />
            <div className="h-[15px] flex items-center justify-center"><ScrollArrow down /></div>
          </div>
        </div>
        <div className="h-[20px] -mt-px flex items-start text-[10.4px] leading-[17px] text-[#7d7d7d]">
          <div className="ml-px w-[67px] text-center relative leading-[18px]">Торговля<i className="absolute right-0 top-[5px] w-px h-[11px] bg-[#777]" /></div>
          <div className="w-[54px] text-center leading-[18px]">Активы</div>
          <div className="w-[92px] h-[18px] border border-t-white border-[#222] bg-white text-center text-black">История Счета</div>
          {tabs.map(([t, w, n]) => (
            <div key={t} className={`${w} flex items-center justify-center relative leading-[18px]`}>
              {t}
              {n && <span className="text-[8px] leading-none text-[#e00] relative top-[4px] ml-px">{n}</span>}
              <i className="absolute right-0 top-[5px] w-px h-[11px] bg-[#777]" />
            </div>
          ))}
        </div>
      </div>
    </div>
  );
}

function StatusBar() {
  const cells = [
    ["Default", "w-[104px]"], ["2020.01.08 20:50", "w-[91px]"], ["O: 1.11119", "w-[64px]"], ["H: 1.11121", "w-[64px]"],
    ["L: 1.11100", "w-[61px]"], ["C: 1.11100", "w-[62px]"], ["V: 82", "w-[59px]"],
  ];
  return (
    <div className="h-[21px] shrink-0 border-t border-[#a8a8a8] flex items-center pt-px text-[10.1px] whitespace-nowrap">
      <span className="pl-[2px] w-[668px]">Для вызова справки нажмите F1</span>
      {cells.map(([c, w]) => (
        <span key={c} className={`${w} h-[16px] leading-[16px] border-l border-[#a8a8a8] pl-[4px] tracking-[-0.15px]`}>{c}</span>
      ))}
      <span className="h-[16px] leading-[16px] border-l border-[#a8a8a8] pl-[5px] flex items-center gap-[3px] tracking-[-0.2px]">
        <svg width="22" height="12" viewBox="0 0 22 12">
          {[0, 1, 2, 3, 4, 5, 6, 7].map((i) => (
            <g key={i}>
              <rect x={i * 2.7} y="0" width="1.900" height="12" fill="#6b7d1c" />
              <rect x={i * 2.7} y={9 - i} width="1.900" height={3 + i} fill="#1c3f63" />
            </g>
          ))}
        </svg>
        169583/50 kb
      </span>
    </div>
  );
}

function Taskbar() {
  return (
    <div className="h-[36px] shrink-0 flex items-center bg-[#66cbea] border-t border-[#4e7d8f]">
      <svg width="26" height="26" viewBox="0 0 26 26" className="ml-[10px]" fill="#fff">
        <path d="M0 5l10.500-1.800V12.500H0zM12 2.900L25 .8V12.500H12zM0 14h10.500v9.300L0 21.500zM12 14h13v11.700l-13-2.100z" />
      </svg>
      <svg width="30" height="29" viewBox="0 0 30 29" className="ml-[22px]">
        <rect x="1" y="0" width="13" height="26" fill="#1f87cf" stroke="#e8f6fd" />
        <path d="M3 4h9" stroke="#fff" strokeWidth="1.500" />
        <path d="M13 16v-2.500h8V16" fill="none" stroke="#4f6475" strokeWidth="1.500" />
        <rect x="5.500" y="16" width="23.500" height="12" fill="#66798a" stroke="#e1eaf0" />
        <path d="M6 20.500h23" stroke="#dfe8ee" strokeWidth="1.200" />
        <rect x="15" y="19" width="4" height="3.500" fill="#fff" />
      </svg>
      <svg width="26" height="22" viewBox="0 0 26 22" className="ml-[27px]">
        <path d="M6 1h19l-5 20H1z" fill="#3b7dba" stroke="#b9d9f0" />
        <path d="M9 5l6 5.500-8 6M14 17h6" fill="none" stroke="#fff" strokeWidth="2.200" />
      </svg>
      <svg width="30" height="27" viewBox="0 0 30 27" className="ml-[28px]">
        <path d="M1 4l1-2.500h10l2 2.500h14v21H1z" fill="#f3d577" stroke="#c69d3b" strokeWidth=".8" />
        <path d="M5 1.500h3" stroke="#2ca02c" strokeWidth="2" /><path d="M12 3.500h3" stroke="#d33" strokeWidth="2" /><path d="M19 5h4" stroke="#2880d0" strokeWidth="2" />
        <rect x="1" y="7" width="28" height="17" rx="1" fill="#fae9a8" stroke="#d8b559" strokeWidth=".8" />
        <path d="M6 26v-9q0-2 2-2h14q2 0 2 2v9h-4v-6H10v6z" fill="#8ecbea" stroke="#5b9fc4" strokeWidth=".8" />
      </svg>
      <div className="ml-[13px] w-[53px] h-full flex items-center justify-center bg-[#66cbea] border-x border-[#4796b2]"><Logo size={28} /></div>
      <div className="ml-[2px] w-[53px] h-full flex items-center justify-center bg-[#8ed9ef] border-x border-[#4796b2]"><Logo size={28} /></div>
      <div className="flex-1" />
      <svg width="60" height="16" viewBox="0 0 60 16" fill="none" stroke="#37637a" strokeWidth=".9">
        <path d="M1 5.500h3l4-4v13l-4-4H1z" fill="#fff" /><path d="M10 5q2 3 0 6M12.500 3.500q3 4.500 0 9" stroke="#fff" strokeWidth="1.200" />
        <rect x="26.500" y="3" width="10" height="8" fill="#fff" /><rect x="28" y="4.500" width="7" height="5" fill="#8fd0e6" /><path d="M28 14h8M32 11v3" /><rect x="22.500" y="1" width="5" height="5" fill="#fff" /><path d="M25 6v7.500h3" />
        <path d="M44.500 1v14" stroke="#fff" strokeWidth="2" /><path d="M46 2h6v2h5l-1 2 1 3h-6V8h-5z" fill="#fff" />
      </svg>
      <span className="ml-[10px] w-[21px] text-[10.5px] text-[#111]">ENG</span>
      <div className="w-[78px] text-center text-[10.3px] leading-[15px] text-[#111] tracking-[-0.3px]"><div>9:28</div><div>09.01.2020</div></div>
      <div className="w-[2px]" />
    </div>
  );
}

export default function App() {
  const menu = [
    ["Файл", "w-[42px]"], ["Вид", "w-[34px]"], ["Вставка", "w-[54px]"], ["Графики", "w-[59px]"],
    ["Сервис", "w-[52px]"], ["Окно", "w-[42px]"], ["Справка", "w-[50px]"],
  ];
  return (
    <div className='w-[1290px] h-[806px] overflow-hidden flex flex-col bg-[#f0f0f0] text-black font-["Noto_Sans","Open_Sans",sans-serif]'>
      <div className="h-[21px] shrink-0 bg-[#66cbea] flex relative">
        <div className="pl-[2px] pt-[3px]"><Logo size={14} /></div>
        <div className="absolute inset-x-0 top-0 text-center text-[13px] leading-[21px] tracking-[-0.04px] pr-[2px]">8669576: RoboForex-DemoPro - Демо Счет - [EURUSD,M5]</div>
        <div className="flex-1" />
        <div className="relative h-[18px] flex mr-[2px] border border-t-0 border-[#355f6f]">
          <div className="w-[25px] flex items-center justify-center border-r border-[#355f6f]"><svg width="9" height="10" viewBox="0 0 9 10"><path d="M0 7.500h9" stroke="#000" strokeWidth="2.400" /></svg></div>
          <div className="w-[23px] flex items-center justify-center"><svg width="10" height="10" viewBox="0 0 10 10" fill="none" stroke="#111"><rect x="1" y="3" width="5.500" height="5.500" strokeWidth="1.800" /><path d="M3 1h6v6" /></svg></div>
          <div className="w-[41px] bg-[#c4574f] flex items-center justify-center"><svg width="8" height="8" viewBox="0 0 8 8"><path d="M1 1l6 6M7 1L1 7" stroke="#111" strokeWidth="2.200" /></svg></div>
        </div>
      </div>
      <div className="h-[18px] shrink-0 flex items-center text-[10.3px] leading-[17px] border-b border-[#b8b8b8]">
        <div className="w-[25px] pl-[3px]"><MtIcon /></div>
        {menu.map(([m, w]) => <div key={m} className={`${w} shrink-0`}>{m}</div>)}
        <div className="flex-1" />
        {["M3 9h5", "M2.500 5.500h5v4h-5zM4.500 5V3h5v4H8", "M3 3l6 6M9 3l-6 6"].map((d, i) => (
          <div key={d} className="w-[17px] h-[17px] flex items-center justify-center border border-[#777] bg-[#fafafa]">
            <svg width="12" height="12" viewBox="0 0 12 12" fill="none" stroke="#000" strokeWidth={i === 1 ? 1.2 : 2}><path d={d} /></svg>
          </div>
        ))}
      </div>
      <div className="h-px shrink-0" />
      <TopToolbar />
      <DrawToolbar />
      <div className="h-[526px] shrink-0 flex">
        <div className="w-[211px] shrink-0 border-t border-[#b4b4b4] border-r-2 border-r-[#a0a0a0]">
          <MarketWatch />
          <Navigator />
        </div>
        <div className="flex-1 min-w-0">
          <div className="relative">
            <Chart />
            <ScalperPanel />
          </div>
          <ChartTabs />
        </div>
      </div>
      <Terminal />
      <StatusBar />
      <Taskbar />
    </div>
  );
}
